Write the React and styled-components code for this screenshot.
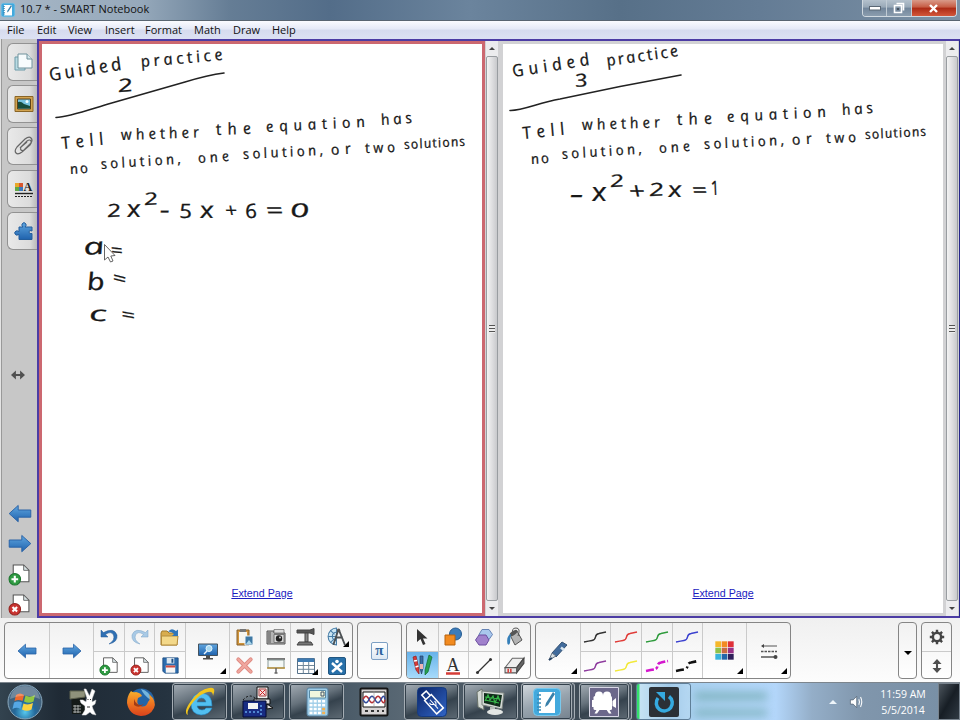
import React from "react";
import styled, { createGlobalStyle } from "styled-components";

const MENU = [
  ["File", 30],
  ["Edit", 31],
  ["View", 37],
  ["Insert", 40],
  ["Format", 49],
  ["Math", 39],
  ["Draw", 39],
  ["Help", 40],
];

// [text, x, baseline, length, angle, size]
const SENTENCE = [
  ["Tell", 63, 149, 42, -6, 17],
  ["whether", 122, 140, 78, -2, 15],
  ["the", 217, 135, 35, -2, 16],
  ["equation", 267, 132, 99, -3, 15],
  ["has", 382, 125, 31, -4, 15],
  ["no", 71, 174, 18, -4, 14],
  ["solution,", 102, 169, 80, -4, 14],
  ["one", 199, 163, 31, -4, 14],
  ["solution,", 244, 159, 80, -3, 14],
  ["or", 332, 155, 20, -4, 15],
  ["two", 366, 153, 30, -2, 14],
  ["solutions", 405, 149, 61, -3, 13],
];

const LEFT_INK = [
  ["Guided", 51, 81, 73, -9, 18],
  ["practice", 142, 67, 82, -5, 16],
  ["2", 119, 92, 15, -4, 18],
  ["2", 108, 217, 14, -2, 18],
  ["x", 128, 217, 14, 0, 24],
  ["2", 145, 205, 14, -3, 17],
  ["-", 161, 218, 10, 0, 24],
  ["5", 180, 218, 13, 0, 20],
  ["x", 201, 218, 14, 0, 23],
  ["+", 226, 217, 12, 0, 19],
  ["6", 246, 218, 12, 0, 20],
  ["=", 267, 218, 17, 0, 22],
  ["0", 291, 217, 19, 0, 19],
  ["a", 85, 255, 21, -4, 23],
  ["=", 111, 256, 12, 6, 18],
  ["b", 88, 290, 18, 0, 24],
  ["=", 112, 283, 14, 14, 18],
  ["c", 90, 321, 18, 0, 21],
  ["=", 121, 320, 14, 10, 18],
];

const RIGHT_INK = [
  ["Guided", 514, 77, 78, -9, 17],
  ["practice", 608, 66, 72, -8, 16],
  ["3", 576, 87, 13, -4, 18],
  ["-", 571, 203, 14, 0, 26],
  ["x", 593, 201, 15, 0, 26],
  ["2", 611, 187, 14, -3, 17],
  ["+", 630, 199, 16, 0, 23],
  ["2", 650, 196, 15, -2, 18],
  ["x", 669, 197, 14, 0, 22],
  ["=", 693, 197, 15, 0, 20],
  ["1", 712, 195, 8, 0, 20],
];

// the italic cut has the one-storey "a"; the skew sets it upright again
const Ink = ({ words }) =>
  words.map(([text, x, y, len, angle, size], i) => (
    <InkText
      key={i}
      fontSize={size}
      textLength={len}
      lengthAdjust={text.length > 1 ? "spacing" : "spacingAndGlyphs"}
      transform={`translate(${x} ${y}) rotate(${angle}) skewX(11)`}
    >
      {text}
    </InkText>
  ));

/* ---------- icons ---------- */

const Icon = ({ size = 20, w, h, box = 20, children }) => (
  <svg
    width={w || size}
    height={h || size}
    viewBox={`0 0 ${box} ${box}`}
    fill="none"
  >
    {children}
  </svg>
);

const BlueArrow = ({ flip, w = 20 }) => (
  <svg width={w} height={w * 0.8} viewBox="0 0 20 16">
    <path
      d="M1 8 8.500 1.200V5H19V11H8.500V14.800Z"
      fill="url(#blue)"
      stroke="#2a62a6"
      strokeWidth=".8"
      transform={flip ? "matrix(-1 0 0 1 20 0)" : undefined}
    />
  </svg>
);

const PageIcon = ({ remove, size = 22 }) => (
  <Icon size={size} box={22}>
    <path d="M5 2H15L20 7V18H5Z" fill="#fff" stroke="#555" />
    <path d="M15 2V7H20Z" fill="#dbe6e8" stroke="#555" strokeWidth=".8" />
    <circle
      cx="6.500"
      cy="15.500"
      r="5.500"
      fill={remove ? "#c93431" : "#2f9b42"}
      stroke={remove ? "#96231f" : "#1d7630"}
    />
    <path
      d={remove ? "m4.300 13.300 4.400 4.400m0-4.400-4.400 4.400" : "M6.500 12.300v6.400M3.300 15.500h6.400"}
      stroke="#fff"
      strokeWidth="2"
    />
  </Icon>
);

const SorterIcon = () => (
  <Icon size={20}>
    <path d="M1 5H11V18H1Z" fill="#b9dbe3" stroke="#6d9aa8" />
    <path d="M4 2H13L18 7V16H4Z" fill="#f7fcfd" stroke="#71929c" />
    <path d="M13 2V7H18" fill="#d5e8ec" stroke="#71929c" />
  </Icon>
);

const GalleryIcon = () => (
  <Icon size={20}>
    <path d="M1 2.500H19V17.500H1Z" fill="#d3a450" stroke="#8a6526" />
    <path d="M3.500 5H16.500V15H3.500Z" fill="#77c3e0" stroke="#5c431a" />
    <path d="M4 8Q7 7 10 10L16 12V14.500H4Z" fill="#174d3c" />
    <circle cx="13" cy="7.500" r="1.500" fill="#f2ffff" />
  </Icon>
);

const ClipIcon = () => (
  <Icon size={20}>
    <path
      d="M6 12 13 5q3-2 4 0t-1 4l-8 7q-4 3-6 1t1-6l8-8q4-3 6-1t0 5l-7 7q-2 1-3 0t0-3l6-5"
      stroke="#666"
      strokeWidth="1.200"
    />
  </Icon>
);

const PropertiesIcon = () => (
  <Icon size={20}>
    <path d="M1 4H5V8H1Z" fill="#e8a72a" />
    <path d="M5 4H9V8H5Z" fill="#d8562d" />
    <path d="M1 8H5V12H1Z" fill="#60a845" />
    <path d="M5 8H9V12H5Z" fill="#3c78bb" />
    <text x="9.500" y="12" fontSize="12" fontFamily="Liberation Serif, serif" fontWeight="bold" fill="#222">A</text>
    <path d="M1 14.500H19" stroke="#222" strokeWidth="1.400" />
    <path d="M1 17.500H19" stroke="#222" strokeDasharray="2 1" />
  </Icon>
);

const PuzzleIcon = () => (
  <Icon size={20}>
    <path
      d="M5 6H9Q7.500 5 8 3q2-3 4 0 .500 2-1 3h7v4q-3-1.500-3 1t3 1.500v6H5v-5q-3 1.500-4-.500t1-3q1.500-.500 3 .500Z"
      fill="url(#blue)"
      stroke="#235d9c"
    />
  </Icon>
);

const UndoIcon = ({ flip }) => (
  <Icon size={20}>
    <path
      d="M2 3V10H9L6.500 7.500Q12 3.500 14.500 8 16.500 13 10 17 19 15 18 8 15 0 4.500 5.500Z"
      fill={flip ? "#a9cae6" : "#2f70b4"}
      stroke={flip ? "#7ba3c4" : "#245b96"}
      strokeWidth=".5"
      transform={flip ? "matrix(-1 0 0 1 20 0)" : undefined}
    />
  </Icon>
);

const OpenIcon = () => (
  <Icon size={20}>
    <path d="M1 6V18H17V6H9L7 4H2Z" fill="#d8ad4e" stroke="#a17b2b" />
    <path d="M1.500 9H18L17 18H1.500Z" fill="#f3d889" stroke="#b48d3c" />
    <path d="M8 5Q11 0 16 4L18 2.500V9H12L14 7Q11 4 8 5Z" fill="#3076b9" />
  </Icon>
);

const SaveIcon = () => (
  <Icon size={19}>
    <path d="M2 2H18V18H4L2 16Z" fill="#2b6cae" stroke="#1e4e84" />
    <path d="M5 10H15V17.500H5Z" fill="#f5f5f5" />
    <path d="M5 10H15V12H5Z" fill="#d14b40" />
    <path d="M6 2H14V8H6Z" fill="#d9e6f0" />
    <path d="M11 3H13V7H11Z" fill="#1e4e84" />
  </Icon>
);

const ScreenIcon = () => (
  <Icon size={20}>
    <path d="M.500 3H19.500V14.500H.500Z" fill="url(#blue)" stroke="#44525e" />
    <path d="M8 15H12V17H15V18.500H5V17H8Z" fill="#4d4d4d" />
    <circle cx="11" cy="7.500" r="3" fill="#a9daf2" stroke="#e5f6ff" />
    <path d="M9 10 6 13" stroke="#ecf5fc" strokeWidth="1.500" />
  </Icon>
);

const PasteIcon = () => (
  <Icon size={20}>
    <path d="M2 3H14V18H2Z" fill="#cf943c" stroke="#88602a" />
    <path d="M4 5H12V16H4Z" fill="#f6f5ef" />
    <path d="M5 2H11V5H5Z" fill="#777" />
    <path d="M10 9H18V18H10Z" fill="#3e78a4" stroke="#f1f7fb" />
    <path d="m11 17 3-4 3 4Z" fill="#a9d6ea" />
  </Icon>
);

const CameraIcon = () => (
  <Icon size={20}>
    <path d="M1 4H8V6H19V17H1Z" fill="#b5b5b5" stroke="#555" />
    <path d="M2 5H5V16H2Z" fill="#858585" />
    <path d="M8 2.500H18V6H8Z" fill="#ddd" stroke="#666" strokeWidth=".7" />
    <path d="M8 7.500H18V15.500H8Z" fill="#d7d7d7" stroke="#777" />
    <circle cx="13" cy="11.500" r="3.200" fill="#222" />
    <circle cx="14" cy="10.500" r="1" fill="#ccc" />
  </Icon>
);

const DocCamIcon = () => (
  <Icon size={20}>
    <path d="M1 3H14L18 1.500V7.500L14 6H1Z" fill="#555" stroke="#444" />
    <path d="M9 6H12V15H9Z" fill="#888" stroke="#444" />
    <path d="M3 15H15L17 18H1Z" fill="#777" stroke="#444" />
  </Icon>
);

const CompassIcon = () => (
  <Icon size={21}>
    <path d="M10 1A8 8 0 1 0 10 17Z" fill="#cbe5f4" stroke="#467ca6" />
    <path d="M10 5A4 4 0 0 0 10 13M10 9H2M4 3L8 7M4 15 8 11" stroke="#467ca6" />
    <path d="M12 2 7 17M12 2 18 17M9 10H16" stroke="#4c5154" strokeWidth="1.700" />
    <circle cx="12" cy="3" r="1.500" fill="#555" />
  </Icon>
);

const DeleteIcon = () => (
  <Icon size={19}>
    <path d="M3.500 3.500 16.500 16.500M16.500 3.500 3.500 16.500" stroke="#df8b83" strokeWidth="4.200" strokeLinecap="round" />
    <path d="M3.500 3.500 16.500 16.500M16.500 3.500 3.500 16.500" stroke="#f0a79f" strokeWidth="2.200" strokeLinecap="round" />
  </Icon>
);

const ShadeIcon = () => (
  <Icon size={20}>
    <path d="M1 2H19V4H1Z" fill="#777" />
    <path d="M2 4H18V12H2Z" fill="#f3f8f6" stroke="#8b9a98" />
    <path d="M1 12H19" stroke="#b9923b" strokeWidth="1.500" />
    <path d="M10 12V17M8.500 17H11.500" stroke="#666" strokeWidth="1.500" />
  </Icon>
);

const TableIcon = () => (
  <Icon size={20}>
    <path d="M1.500 2.500H18.500V17.500H1.500Z" fill="#fff" stroke="#56728a" />
    <path d="M2 2.500H18V6H2Z" fill="#3e7bb3" />
    <path d="M7.300 6V17M12.700 6V17M2 9.500H18M2 13.300H18" stroke="#71889a" />
  </Icon>
);

const ExchangeIcon = () => (
  <Icon size={20}>
    <rect x="1.500" y="1.500" width="17" height="17" rx="1.500" fill="#2870a9" stroke="#215680" />
    <path d="m5 7 5 4.500 5-4.500M5 16l5-4.500 5 4.500" stroke="#fff" strokeWidth="2.500" />
    <circle cx="10" cy="5.500" r="1.800" fill="#fff" />
  </Icon>
);

const PointerIcon = () => (
  <Icon size={20}>
    <path d="M5 2V15L8.500 12 11 18 13.500 17 11 11.500H15.500Z" fill="#333" />
  </Icon>
);

const ShapesIcon = () => (
  <Icon size={20}>
    <circle cx="12.500" cy="7" r="6" fill="#3c7cba" stroke="#235a91" />
    <path d="M2 8H12V18H2Z" fill="#f28b20" stroke="#b8620d" />
  </Icon>
);

const PolygonIcon = () => (
  <Icon size={20}>
    <path d="M8 2.500H15L18.500 7.500 15 12.500H8L5 7.500Z" fill="#a9c7ed" stroke="#6583b5" />
    <path d="M5 8H12L15 13 12 18H5L1.500 13Z" fill="#a081cc" stroke="#6c4fa0" />
  </Icon>
);

const FillIcon = () => (
  <Icon size={20}>
    <path d="M5 8 12 4 17 13 10 18Z" fill="#b4b4b4" stroke="#555" />
    <ellipse cx="8.500" cy="6" rx="4.500" ry="2" transform="rotate(-35 8.500 6)" fill="#555" />
    <path d="M8 7Q6 1 11 1T13 9" stroke="#555" />
    <path d="M6 7Q1 9 2.500 17 4 19 5 16L5.500 10Z" fill="#347fb9" />
  </Icon>
);

const PensIcon = () => (
  <Icon size={23} box={23}>
    <path d="M2 3 5 2 8 15 8 20 5 16Z" fill="#d93a37" stroke="#8b2222" strokeWidth=".7" />
    <path d="M3 7 6 6.500M4.500 13 7.500 12" stroke="#fff" strokeWidth="1.500" />
    <path d="M9 2H12V14L10.500 20 9 14Z" fill="#356ca5" stroke="#263c60" strokeWidth=".7" />
    <path d="M9 10H12V15H9Z" fill="#efb4b4" />
    <path d="M18 1 21 3 17 18 14 21 14 16Z" fill="#26a050" stroke="#126a31" strokeWidth=".7" />
  </Icon>
);

const TextIcon = () => (
  <Icon size={20}>
    <text x="3.500" y="14.500" fontSize="18" fontFamily="Liberation Serif, serif" fill="#333">A</text>
    <path d="M3 17.500H17" stroke="#d53c37" strokeWidth="2.500" />
  </Icon>
);

const LineIcon = () => (
  <Icon size={20}>
    <path d="M3.500 16.500 16.500 3.500" stroke="#333" strokeWidth="1.200" />
    <circle cx="3.500" cy="16.500" r="1.500" fill="#333" />
    <circle cx="16.500" cy="3.500" r="1.500" fill="#333" />
  </Icon>
);

const EraserIcon = () => (
  <Icon size={21}>
    <path d="M8 3H19L12 12H1Z" fill="#eee" stroke="#666" />
    <path d="M19 3V8L12 17V12Z" fill="#666" stroke="#444" />
    <path d="M1 12H12V17H1Z" fill="#e4e4e4" stroke="#555" />
    <path d="M4 13V17M6.500 13V17" stroke="#d9433f" strokeWidth="1.500" />
  </Icon>
);

const PenIcon = () => (
  <Icon size={22} box={22}>
    <path d="M15 2 20 5 9 17 5 13Z" fill="#416b9c" stroke="#345172" />
    <path d="M14 7.500 17 10" stroke="#d9e6ef" strokeWidth="2.500" />
    <path d="M5 13 9 16 2 20Z" fill="#d9e0e5" stroke="#657483" />
    <path d="M2 20 5 18" stroke="#244062" strokeWidth="2" />
  </Icon>
);

const StrokeIcon = ({ color, dash, width = 1.5 }) => (
  <svg width="24" height="14" viewBox="0 0 24 14" fill="none">
    <path
      d="M1 12Q6 11 9 10.500 12 10 12.500 7T16 3.500L23 2"
      stroke={color}
      strokeWidth={width}
      strokeDasharray={dash}
    />
  </svg>
);

const SWATCHES = ["#f5b72a", "#f28a22", "#df3038", "#8fc14a", "#c86b43", "#983187", "#38b4dc", "#2366aa", "#30205b"];

const PaletteIcon = () => (
  <Icon size={19} box={18}>
    {SWATCHES.map((c, i) => (
      <rect key={c} x={(i % 3) * 6 + 0.3} y={Math.floor(i / 3) * 6 + 0.3} width="5.400" height="5.400" fill={c} />
    ))}
  </Icon>
);

const LineStyleIcon = () => (
  <svg width="18" height="18" viewBox="0 0 18 18" fill="none" stroke="#555">
    <path d="M2 4H17" />
    <path d="M4 2 1 4 4 6Z" fill="#444" stroke="none" />
    <path d="M1 9.500H17" strokeWidth="1.500" strokeDasharray="2.500 1" />
    <path d="M1 15H15" strokeWidth="1.500" />
    <circle cx="15.500" cy="15" r="2" fill="#444" stroke="none" />
  </svg>
);

const GearIcon = () => (
  <Icon size={16}>
    <circle cx="10" cy="10" r="5.200" stroke="#444" strokeWidth="3.200" />
    <path
      d="M10 1V4M10 16V19M1 10H4M16 10H19M3.600 3.600 5.800 5.800M14.200 14.200 16.400 16.400M3.600 16.400 5.800 14.200M14.200 5.800 16.400 3.600"
      stroke="#444"
      strokeWidth="3"
    />
  </Icon>
);

const DoubleArrow = ({ vertical }) => (
  <Icon size={14}>
    <path
      d="M0 10 7 3.500V8.500H13V3.500L20 10 13 16.500V11.500H7V16.500Z"
      fill="#505050"
      transform={vertical ? "rotate(90 10 10)" : undefined}
    />
  </Icon>
);

const StartOrb = () => (
  <Icon size={36} box={36}>
    <circle cx="18" cy="18" r="17" fill="url(#orb)" stroke="#89a8bd" />
    <path d="M9 11Q13 8 17 11L15.500 17Q11.500 15 7.500 17Z" fill="#ee6a2f" />
    <path d="M18.500 11.500Q23 14 28 11L26.500 17.500Q22 20 17 17.500Z" fill="#92c740" />
    <path d="M7 18.500Q11 16.500 15 18.500L13.500 25Q10 22.500 5.500 25Z" fill="#55a7e5" />
    <path d="M16.500 19.500Q21 21.500 26 19L24.500 25.500Q20 28 15 25.500Z" fill="#fbd23f" />
    <path d="M3 15Q5 2 18 2T33 15Q18 8 3 15Z" fill="#fff" opacity=".25" />
  </Icon>
);

const RabbitIcon = () => (
  <Icon size={28} box={28}>
    <path d="M2 3H16V26H3Z" fill="#141a18" />
    <path d="M1 3H16V9L1 11Z" fill="#8f927b" stroke="#5f624f" />
    <path d="M4 18H12M4 21H12M4 24H12M6 17V25M9 17V25" stroke="#c4c8c6" strokeWidth=".8" />
    <path
      d="M18 10 15 1 17 1 20.500 8 23 1 26 3 23 11 23 14 27 12 26 16 23 18 24 21 27 27 23 26 21 24 17 27 13 27 16 22 16 18 12 15 11 12 14 12 17 14Z"
      fill="#fff"
      stroke="#ddd"
      strokeWidth=".5"
    />
    <path d="M18.500 11.500H19.500M21 11.500H22M18 19H21" stroke="#333" />
  </Icon>
);

const FirefoxIcon = () => (
  <Icon size={30} box={30}>
    <circle cx="15.500" cy="14.500" r="13" fill="#2465a7" />
    <path d="M15 2Q24 4 25 13 18 9 15 2Z" fill="#74b5de" />
    <path
      d="M5 4Q7 6 10 5 15 6 16 9L12 11Q10 17 14 19 20 21 22 15 25 12 23 7 31 14 28 21 24 29 15 29 3 28 1 16 1 9 5 4Z"
      fill="url(#fire)"
    />
    <path d="M8 12Q10 18 15 18L18 17Q13 22 8 18Z" fill="#a23c16" />
  </Icon>
);

const ExplorerIcon = () => (
  <Icon size={32} box={32}>
    <path
      d="M28 20H13Q14 24 18 24 21 24 22 22H28Q25 29 17 29 7 28 7 18 8 7 18 7 28 8 28 20ZM13 16H22Q21 12 17.500 12 14 12 13 16Z"
      fill="#52bff0"
      stroke="#2387c4"
      strokeWidth=".6"
      fillRule="evenodd"
    />
    <path
      d="M5 30Q-2 27 7 15T25 2Q33 0 29 10 29 4 22 6.500 13 10 7 19T5 30Z"
      fill="#f2c51c"
    />
  </Icon>
);

const PcBoardIcon = () => (
  <Icon size={32} box={32}>
    <path d="M15 1H26V13H15Z" fill="#eee" stroke="#111" />
    <path d="M17 3H24V10H17Z" fill="#f8dede" stroke="#a44" />
    <path d="m18 4 5 5m0-5-5 5" stroke="#c22" />
    <path d="M12 13H28V18H12ZM25 18 31 22 25 23Z" fill="#ddd" stroke="#111" />
    <path d="M1 15H24V31H1Z" fill="#182c83" stroke="#050b33" />
    <path d="M6 17H16V23H6Z" fill="#f4f4f4" />
    <path d="M3 26H17M19 19V29" stroke="#4f86d0" strokeWidth="2" strokeDasharray="2 2" />
    <path d="M1 14Q8 6 15 14" stroke="#111" strokeDasharray="2 2" />
  </Icon>
);

const CalculatorIcon = () => (
  <Icon size={30} box={30}>
    <rect x="5" y="1" width="21" height="28" rx="2" fill="#9fcde8" stroke="#547f9d" />
    <path d="M7.500 3.500H23.500V11H7.500Z" fill="#f0f7de" stroke="#598aa5" />
    <path d="M19 5H22V9H19Z" stroke="#456" />
    {[0, 1, 2, 3].map((r) =>
      [0, 1, 2, 3].map((c) => (
        <rect
          key={`${r}${c}`}
          x={7.5 + c * 4.2}
          y={13 + r * 3.9}
          width="3"
          height="2.500"
          fill={c === 3 && r > 1 ? "#f3b153" : "#fff"}
        />
      ))
    )}
  </Icon>
);

const ScopeIcon = () => (
  <Icon size={30} box={30}>
    <rect x="1.500" y="1.500" width="27" height="27" rx="1" fill="#d7d3d3" stroke="#151515" strokeWidth="2" />
    <path d="M4 5H26V20H4Z" fill="#fff" stroke="#111" />
    <path d="M4 12.500Q7 6 10 12.500T16 12.500 22 12.500 26 12.500" stroke="#b63035" strokeWidth="1.500" />
    <path d="M4 12.500Q7 19 10 12.500T16 12.500 22 12.500 26 12.500" stroke="#334b9a" strokeWidth="1.500" />
    <path d="M15 4V20" stroke="#999" strokeWidth=".6" />
    <path d="M6 24H9M12 24H15M18 24H20M23 24H25" stroke="#333" strokeWidth="2" />
  </Icon>
);

const UsbIcon = () => (
  <Icon size={30} box={30}>
    <rect x=".5" y=".5" width="29" height="29" rx="4" fill="url(#usb)" stroke="#153b80" />
    <g transform="rotate(-42 15 15)" stroke="#fff" strokeWidth="1.500">
      <path d="M10.500 9H19.500V27H10.500ZM12 3H18V9H12Z" />
      <path d="M15 12V24M15 18 12.500 16V14M15 21 17.500 18V16" strokeWidth="1" />
    </g>
  </Icon>
);

const MonitorIcon = () => (
  <Icon size={30} box={30}>
    <path d="M1 5 6 2 8 23 2 20Z" fill="#d4d9d4" stroke="#687168" />
    <path d="M6 4 28 6 26 22 6 18Z" fill="#d4dad6" stroke="#7b827f" />
    <path d="M8 6 26 8 24 20 8 16Z" fill="#102b1a" />
    <path d="m9 14 3-6 2 5 3-4 2 7 3-7 2 5M9 10 23 12M9 13 23 16" stroke="#38b84b" strokeWidth="1.200" />
    <path d="M14 20H19V24H14Z" fill="#b7bdba" />
    <ellipse cx="19" cy="25" rx="8" ry="3" fill="#e3e6e4" />
  </Icon>
);

const NotebookIcon = ({ size = 28 }) => (
  <Icon size={size} box={28}>
    <rect x=".5" y=".5" width="27" height="27" rx="4" fill="#43a9dd" stroke="#79c9ed" />
    <path d="M6 4H22V25H6Z" fill="#fff" />
    <path d="M4 7H8M4 11H8M4 15H8M4 19H8M4 22H8" stroke="#3a8ab5" strokeWidth="1.500" />
    <path d="M20 4 22 6 15 17 12 19 13 15Z" fill="#3980aa" />
  </Icon>
);

const CamcorderIcon = () => (
  <Icon size={30} box={30}>
    <path d="M.500.500H29.500V29.500H.500Z" fill="#6c688b" stroke="#d9d8e7" />
    <circle cx="10" cy="8.500" r="4" fill="#fff" />
    <circle cx="18" cy="8.500" r="4" fill="#fff" />
    <rect x="4.500" y="9" width="18.500" height="14" rx="1.500" fill="#fff" />
    <path d="M3 13H5V20H3ZM23.500 14 27 11V21L23.500 19ZM8 22 5.500 26.500H8L10.500 23ZM17 22 20 26.500H22.500L20 22Z" fill="#fff" />
  </Icon>
);

const RefreshIcon = () => (
  <Icon size={30} box={30}>
    <rect width="30" height="30" rx="2" fill="#2b3036" />
    <path d="M20 9.500A8 8 0 1 1 9 11" stroke="#35aae0" strokeWidth="3.500" />
    <path d="M7 5H16V14Z" fill="#35aae0" />
  </Icon>
);

const SpeakerIcon = () => (
  <Icon size={14}>
    <path d="M2 7H6L11 2V18L6 13H2Z" fill="#fff" stroke="#526171" />
    <path d="M14 6Q16 10 14 14M16.500 3Q20 10 16.500 17" stroke="#fff" strokeWidth="1.500" />
  </Icon>
);

const TABS = [SorterIcon, GalleryIcon, ClipIcon, PropertiesIcon, PuzzleIcon];

// top / bottom pairs for the split toolbar columns
const EDIT_TOOLS = [
  [<UndoIcon />, <PageIcon size={20} />],
  [<UndoIcon flip />, <PageIcon size={20} remove />],
  [<OpenIcon />, <SaveIcon />],
];
const INSERT_TOOLS = [
  [<PasteIcon />, <DeleteIcon />],
  [<CameraIcon />, <ShadeIcon />],
  [<DocCamIcon />, <TableIcon />],
  [<CompassIcon />, <ExchangeIcon />],
];
const DRAW_TOOLS = [
  [<PointerIcon />, <PensIcon />],
  [<ShapesIcon />, <TextIcon />],
  [<PolygonIcon />, <LineIcon />],
  [<FillIcon />, <EraserIcon />],
];
const STROKES = [
  [<StrokeIcon color="#333" />, <StrokeIcon color="#8e3c9e" />],
  [<StrokeIcon color="#e03c38" />, <StrokeIcon color="#f2e93b" />],
  [<StrokeIcon color="#2e9b3c" />, <StrokeIcon color="#d417cd" width={2.6} dash="8 2 3 2" />],
  [<StrokeIcon color="#3b41cf" />, <StrokeIcon color="#111" width={2.6} dash="8 3 2 3" />],
];

const Pairs = ({ items, active, corners = [] }) =>
  items.map(([top, bottom], i) => (
    <Column key={i}>
      <Half>
        {top}
        {corners.includes(`${i}t`) && <Corner />}
      </Half>
      <Half $active={active === i}>
        {bottom}
        {corners.includes(`${i}b`) && <Corner />}
      </Half>
    </Column>
  ));

const ScrollBar = () => (
  <Scroll>
    <ScrollArrow />
    <Thumb>
      <Grip />
    </Thumb>
    <ScrollArrow $down />
  </Scroll>
);

const App = () => {
  return (
    <Window>
      <GlobalStyle />
      <Defs>
        <defs>
          <linearGradient id="blue" x2="0" y2="1">
            <stop stopColor="#5fa6e0" />
            <stop offset="1" stopColor="#1f62ad" />
          </linearGradient>
          <radialGradient id="orb" cy=".8">
            <stop stopColor="#56c7ee" />
            <stop offset=".6" stopColor="#24699b" />
            <stop offset="1" stopColor="#40617c" />
          </radialGradient>
          <linearGradient id="fire" x2="0" y2="1">
            <stop stopColor="#f6b12c" />
            <stop offset=".5" stopColor="#ee7420" />
            <stop offset="1" stopColor="#d9421c" />
          </linearGradient>
          <linearGradient id="usb" x2="1" y2="1">
            <stop stopColor="#0a2467" />
            <stop offset="1" stopColor="#3165c6" />
          </linearGradient>
        </defs>
      </Defs>

      <TitleBar>
        <NotebookIcon size={14} />
        <Title>10.7 * - SMART Notebook</Title>
        <Controls>
          <Control>
            <svg width="12" height="5">
              <rect x=".5" y=".5" width="11" height="3.500" fill="#fff" stroke="#5b6875" />
            </svg>
          </Control>
          <Control>
            <svg width="12" height="12" fill="none">
              <path d="M3.500 1.500H10.500V8.500M1.500 3.500H8.500V10.500H1.500Z" stroke="#fff" strokeWidth="1.600" />
              <path d="M4 6H6V8H4Z" fill="#46525f" />
            </svg>
          </Control>
          <Control $close>
            <svg width="11" height="9">
              <path d="m2 1 7 7M9 1 2 8" stroke="#fff" strokeWidth="2.400" />
            </svg>
          </Control>
        </Controls>
      </TitleBar>

      <MenuBar>
        {MENU.map(([label, width]) => (
          <MenuItem key={label} $width={width}>
            {label}
          </MenuItem>
        ))}
      </MenuBar>

      <Main>
        <SideBar>
          {TABS.map((TabIcon, i) => (
            <Tab key={i}>
              <TabIcon />
            </Tab>
          ))}
          <SideMiddle>
            <DoubleArrow />
          </SideMiddle>
          <SideNav>
            <BlueArrow w={24} />
            <BlueArrow w={24} flip />
            <PageIcon size={23} />
            <PageIcon size={23} remove />
          </SideNav>
        </SideBar>

        <Pages>
          <PageFrame $active>
            <Page>
              <svg width="440" height="569" viewBox="42 44 440 569">
                <Ink words={LEFT_INK} />
                <Ink words={SENTENCE} />
                <InkLine d="M56 117.500C68 117 88 110 110 103.500L185 82Q208 75 224 73" />
                <path
                  d="M104.500 244.500V260L108 257 110.500 262 113 261 110.800 256 115 255.500Z"
                  fill="#fff"
                  stroke="#555"
                  strokeWidth=".9"
                />
              </svg>
              <ExtendLink>Extend Page</ExtendLink>
            </Page>
          </PageFrame>
          <ScrollBar />
          <PageFrame>
            <Page>
              <svg width="440" height="569" viewBox="503 44 440 569">
                <Ink words={RIGHT_INK} />
                <g transform="translate(461 -10)">
                  <Ink words={SENTENCE} />
                </g>
                <InkLine d="M510 110.500C522 111 538 103 560 99L620 86.500 681 75" />
              </svg>
              <ExtendLink>Extend Page</ExtendLink>
            </Page>
          </PageFrame>
          <ScrollBar />
        </Pages>
      </Main>

      <ToolBar>
        <Group>
          <Big>
            <BlueArrow />
          </Big>
          <Big>
            <BlueArrow flip />
          </Big>
          <Pairs items={EDIT_TOOLS} />
          <Big>
            <ScreenIcon />
            <Corner />
          </Big>
          <Pairs items={INSERT_TOOLS} corners={["2b", "3t"]} />
        </Group>
        <Group>
          <Big $width={43}>
            <PiButton>π</PiButton>
          </Big>
        </Group>
        <Group>
          <Pairs items={DRAW_TOOLS} active={0} />
        </Group>
        <Group>
          <Big>
            <PenIcon />
            <Corner />
          </Big>
          <Pairs items={STROKES} />
          <Big>
            <PaletteIcon />
            <Corner />
          </Big>
          <Big>
            <LineStyleIcon />
            <Corner />
          </Big>
        </Group>
        <Spacer />
        <Group>
          <More>
            <Caret />
          </More>
        </Group>
        <Group>
          <Column $width={29}>
            <Half>
              <GearIcon />
            </Half>
            <Half>
              <DoubleArrow vertical />
            </Half>
          </Column>
        </Group>
      </ToolBar>

      <TaskBar>
        <Task $width={50}>
          <StartOrb />
        </Task>
        <Task $width={66}>
          <RabbitIcon />
        </Task>
        <Task $width={50}>
          <FirefoxIcon />
        </Task>
        <Task $width={55} $gap={6} $open>
          <ExplorerIcon />
        </Task>
        <Task $width={54} $gap={4} $open>
          <PcBoardIcon />
        </Task>
        <Task $width={55} $gap={4} $open>
          <CalculatorIcon />
        </Task>
        <Task $width={60}>
          <ScopeIcon />
        </Task>
        <Task $width={55} $open>
          <UsbIcon />
        </Task>
        <Task $width={55} $gap={4} $open>
          <MonitorIcon />
        </Task>
        <Task $width={51} $gap={3} $open $bright>
          <NotebookIcon />
        </Task>
        <StackEdge />
        <Task $width={50} $gap={4} $open>
          <CamcorderIcon />
        </Task>
        <StackEdge />
        <Task $width={55} $gap={4} $open $progress>
          <RefreshIcon />
        </Task>
        <Glass>
          <GlassBlur />
        </Glass>
        <Tray>
          <TrayArrow />
          <SpeakerIcon />
          <Clock>
            <span>11:59 AM</span>
            <span>5/5/2014</span>
          </Clock>
        </Tray>
        <ShowDesktop />
      </TaskBar>
    </Window>
  );
};

export default App;

const GlobalStyle = createGlobalStyle`
  * {
    box-sizing: border-box;
  }
  body {
    margin: 0;
    overflow: hidden;
    font-family: "Open Sans", "Noto Sans", sans-serif;
  }
  svg {
    display: block;
    flex: none;
    overflow: visible;
  }
`;

const Window = styled.div`
  display: flex;
  flex-direction: column;
  width: 960px;
  height: 720px;
  background: #f5f5f5;
`;
const Defs = styled.svg`
  position: absolute;
  width: 0;
  height: 0;
`;

const TitleBar = styled.div`
  display: flex;
  align-items: center;
  flex: none;
  height: 21px;
  padding-left: 1px;
  border-bottom: 1px solid #596571;
  background: linear-gradient(
    90deg,
    #a7b7c6 0,
    #96a9bb 140px,
    #657d95 230px,
    #536d89 330px,
    #6b849d 470px,
    #577088 620px,
    #647c95 760px,
    #7c91a5 960px
  );
`;
const Title = styled.div`
  flex: 1;
  padding: 0 0 2px 5px;
  font-size: 11px;
  line-height: 18px;
  color: #111;
  white-space: nowrap;
`;
const Controls = styled.div`
  display: flex;
  align-self: flex-start;
  width: 95px;
  height: 17px;
  margin-right: 3px;
  border: 1px solid #d0d9e0;
  border-top: 0;
  border-radius: 0 0 4px 4px;
  overflow: hidden;
`;
const Control = styled.div`
  display: flex;
  align-items: center;
  justify-content: center;
  width: ${(props) => (props.$close ? "45px" : "25px")};
  border-right: ${(props) => (props.$close ? "0" : "1px solid #c0cbd4")};
  background: ${(props) =>
    props.$close
      ? "linear-gradient(#d99a89 0, #c65b43 45%, #ab2a15 50%, #d3573a)"
      : "linear-gradient(#b4c1cd 0, #98a8b7 45%, #71859a 50%, #8b9dae)"};
`;

const MenuBar = styled.div`
  display: flex;
  flex: none;
  height: 18px;
  padding-left: 7px;
  background: linear-gradient(#fafbff, #e5e9f7 45%, #d6dbee 50%, #dce1f3);
`;
const MenuItem = styled.div`
  width: ${(props) => props.$width}px;
  font-size: 11px;
  line-height: 18px;
  color: #111;
`;

const Main = styled.div`
  display: flex;
  flex: none;
  height: 579px;
`;
const SideBar = styled.div`
  display: flex;
  flex-direction: column;
  flex: none;
  width: 37px;
  padding-top: 4px;
  border-left: 1px solid #e4e4e4;
  background: #c7c7c7;
  box-shadow: inset 1px 0 #999;
`;
const Tab = styled.div`
  display: flex;
  align-items: center;
  height: 38px;
  margin: 0 0 4.2px 6px;
  padding-left: 6px;
  border: 1px solid #929292;
  border-right: 0;
  border-radius: 6px 0 0 6px;
  background: linear-gradient(90deg, #e9e9e9, #dcdcdc 75%, #b9b9b9);
`;
const SideMiddle = styled.div`
  display: flex;
  flex: 1;
  padding: 114px 0 0 10px;
`;
const SideNav = styled.div`
  display: grid;
  grid-template-rows: repeat(4, 30px);
  align-items: center;
  padding-left: 7px;
  margin-bottom: -1px;
`;

const Pages = styled.div`
  display: flex;
  flex: 1;
  border: solid #4c3ca4;
  border-width: 2px 1px 2px 2px;
  border-right-color: #26268c;
  background: #d2d2d4;
`;
const PageFrame = styled.div`
  display: flex;
  flex: none;
  width: ${(props) => (props.$active ? "446px" : "444px")};
  padding: ${(props) => (props.$active ? "0" : "3px 2px 0")};
  margin-left: ${(props) => (props.$active ? "0" : "3px")};
  border: solid #cc6870;
  border-width: ${(props) => (props.$active ? "3px" : "0")};
`;
const Page = styled.div`
  display: flex;
  flex-direction: column;
  align-items: center;
  width: 440px;
  height: 569px;
  background: #fff;
`;
const InkText = styled.text`
  font-family: "Open Sans", "Noto Sans", sans-serif;
  font-style: italic;
  fill: #181818;
  stroke: #181818;
  stroke-width: 0.25;
`;
const InkLine = styled.path`
  fill: none;
  stroke: #222;
  stroke-width: 1.6;
  stroke-linecap: round;
`;
const ExtendLink = styled.a`
  margin-top: -26px;
  font: 10.7px "Liberation Sans", Arial, sans-serif;
  line-height: 13px;
  color: #1b1bc0;
  text-decoration: underline;
`;

const Scroll = styled.div`
  display: flex;
  flex-direction: column;
  flex: none;
  width: 12px;
  margin-left: 1px;
  background: #ececee;
`;
const ScrollArrow = styled.div`
  display: flex;
  align-items: center;
  justify-content: center;
  height: 15px;
  &::after {
    content: "";
    border: solid transparent;
    border-width: 0 3px;
    border-${(props) => (props.$down ? "top" : "bottom")}: 3px solid #444;
  }
`;
const Thumb = styled.div`
  display: flex;
  align-items: center;
  justify-content: center;
  flex: 1;
  border: 1px solid #999da1;
  border-radius: 2px;
  background: linear-gradient(90deg, #f4f4f4, #dfdfe1 50%, #c8c9cc);
`;
const Grip = styled.div`
  width: 6px;
  height: 8px;
  background: repeating-linear-gradient(#555 0 1px, #eee 1px 3px);
`;

const ToolBar = styled.div`
  display: flex;
  flex: none;
  gap: 4px;
  height: 64px;
  padding: 4px 8px 3px 4px;
  background: linear-gradient(#f0f0f0, #fcfcfc);
`;
const Group = styled.div`
  display: flex;
  height: 57px;
  border: 1px solid #858585;
  border-radius: 4px;
  overflow: hidden;
  background: linear-gradient(#f1f1f1, #fff);
  > * + * {
    border-left: 1px solid #cacaca;
  }
`;
const Big = styled.div`
  position: relative;
  display: flex;
  align-items: center;
  justify-content: center;
  width: ${(props) => props.$width || 44}px;
`;
const Column = styled.div`
  width: ${(props) => props.$width || 30.7}px;
`;
const Half = styled.div`
  position: relative;
  display: flex;
  align-items: center;
  justify-content: center;
  height: 28px;
  background: ${(props) => (props.$active ? "linear-gradient(#67b2ea, #a9dcfb)" : "none")};
  & + & {
    border-top: 1px solid #cacaca;
  }
`;
// small triangle that marks a tool with a drop-down
const Corner = styled.i`
  position: absolute;
  right: 3px;
  bottom: 4px;
  border-left: 6px solid transparent;
  border-bottom: 6px solid #000;
`;
const PiButton = styled.div`
  width: 17px;
  height: 18px;
  border: 1px solid #7da0c4;
  border-radius: 2px;
  background: linear-gradient(#fff, #dce8f3);
  font: bold 15px/15px "Liberation Serif", serif;
  text-align: center;
  color: #2f659f;
`;
const Spacer = styled.div`
  flex: 1;
`;
const More = styled.div`
  display: flex;
  align-items: center;
  justify-content: center;
  width: 17px;
  padding-top: 5px;
`;
const Caret = styled.div`
  border: 4px solid transparent;
  border-top-color: #000;
  border-bottom: 0;
`;

const TaskBar = styled.div`
  display: flex;
  flex: 1;
  border-top: 1px solid #7c858d;
  background: linear-gradient(
    90deg,
    #33434f 0,
    #1f2a35 60px,
    #253340 165px,
    #4b5b68 345px,
    #586773 400px,
    #3f4c57 520px,
    #3f4c57 635px,
    #a5c9ea 690px
  );
`;
const Task = styled.div`
  display: flex;
  align-items: center;
  justify-content: center;
  flex: none;
  width: ${(props) => props.$width}px;
  margin-left: ${(props) => props.$gap || 0}px;
  ${(props) =>
    props.$open &&
    `
    border: 1px solid #a5adb4;
    border-radius: 3px;
    box-shadow: inset 0 0 0 1px #33404b;
    background: linear-gradient(160deg, #a4adb5, #66727c 40%, #35424d 60%, #5f6b75);
  `}
  ${(props) => props.$bright && "background: linear-gradient(160deg, #d4dadf, #98a4ae 50%, #75828e);"}
  ${(props) =>
    props.$progress &&
    `
    border-color: #5f7e98;
    box-shadow: none;
    background: linear-gradient(90deg, #35df6b 0 2px, #c5e2f3 3px, #a2cae8 60%, #b6d8f3);
  `}
`;
const StackEdge = styled.div`
  flex: none;
  width: 3px;
  border: 1px solid #a5adb4;
  border-left: 0;
  border-radius: 0 3px 3px 0;
  background: #4a5661;
`;
const Glass = styled.div`
  flex: 1;
  display: flex;
  align-items: center;
  padding-left: 4px;
  background: linear-gradient(90deg, #a9d0f0, #b3d6fa 70%, #94aec8);
`;
const GlassBlur = styled.div`
  width: 72px;
  height: 28px;
  background: repeating-linear-gradient(transparent 0 4px, #609f9b 5px 11px, transparent 13px 17px);
  filter: blur(4px);
  opacity: 0.6;
`;
const Tray = styled.div`
  display: flex;
  align-items: center;
  flex: none;
  width: 126px;
  gap: 12px;
  padding: 0 10px 0 17px;
  background: linear-gradient(90deg, #94aec8, #8096ac 40%, #7990a6);
`;
const TrayArrow = styled.div`
  border: 4px solid transparent;
  border-bottom-color: #eef5fa;
  border-top: 0;
`;
const Clock = styled.div`
  display: flex;
  flex-direction: column;
  align-items: center;
  flex: 1;
  margin-left: 3px;
  font-size: 10.5px;
  line-height: 16px;
  color: #fff;
  white-space: nowrap;
`;
const ShowDesktop = styled.div`
  flex: none;
  width: 22px;
  border: 1px solid #78838d;
  background: linear-gradient(120deg, #4c555d, #171e25 50%, #303a43);
`;
